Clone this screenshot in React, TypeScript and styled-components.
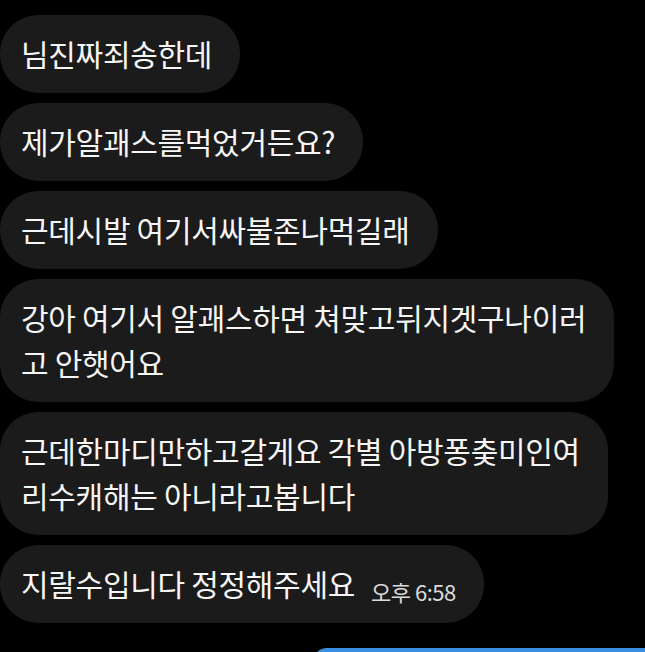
import React from "react";
import styled, { createGlobalStyle } from "styled-components";

const GlobalStyle = createGlobalStyle`
  html, body {
    margin: 0;
    padding: 0;
    background: #000;
    overflow: hidden;
  }
`;

const messages: { lines: string[]; time?: string }[] = [
  { lines: ["님진짜죄송한데"] },
  { lines: ["제가알괘스를먹었거든요?"] },
  { lines: ["근데시발 여기서싸불존나먹길래"] },
  { lines: ["강아 여기서 알괘스하면 쳐맞고뒤지겟구나이러", "고 안햇어요"] },
  { lines: ["근데한마디만하고갈게요 각별 아방퐁춪미인여", "리수캐해는 아니라고봅니다"] },
  { lines: ["지랄수입니다 정정해주세요"], time: "오후 6:58" },
];

const Screen = styled.div`
  width: 645px;
  height: 652px;
  background: #000;
  display: flex;
  flex-direction: column;
  align-items: flex-start;
  gap: 10px;
  padding-top: 15px;
  box-sizing: border-box;
  position: relative;
  overflow: hidden;
  font-family: "Noto Sans CJK KR", "Noto Sans", sans-serif;
`;

const Bubble = styled.div`
  display: flex;
  align-items: flex-end;
  gap: 16px;
  background: #1b1b1b;
  color: #f6f6f6;
  border-radius: 38px;
  padding: 16px 28px 17px 21px;
  font-size: 30px;
  line-height: 45px;
  letter-spacing: -0.3px;
  white-space: nowrap;
`;

const Text = styled.div`
  display: flex;
  flex-direction: column;
`;

const Time = styled.span`
  font-size: 22px;
  line-height: 26px;
  color: #dcdcdc;
  margin-bottom: 2px;
  letter-spacing: -0.5px;
`;

const MyBubbleEdge = styled.div`
  position: absolute;
  left: 313px;
  right: 0;
  top: 648px;
  height: 20px;
  background: #3b8fe2;
  border-top-left-radius: 14px;
`;

export default function App() {
  return (
    <>
      <GlobalStyle />
      <Screen>
        {messages.map((m, i) => (
          <Bubble key={i}>
            <Text>
              {m.lines.map((l, j) => (
                <span key={j}>{l}</span>
              ))}
            </Text>
            {m.time && <Time>{m.time}</Time>}
          </Bubble>
        ))}
        <MyBubbleEdge />
      </Screen>
    </>
  );
}
